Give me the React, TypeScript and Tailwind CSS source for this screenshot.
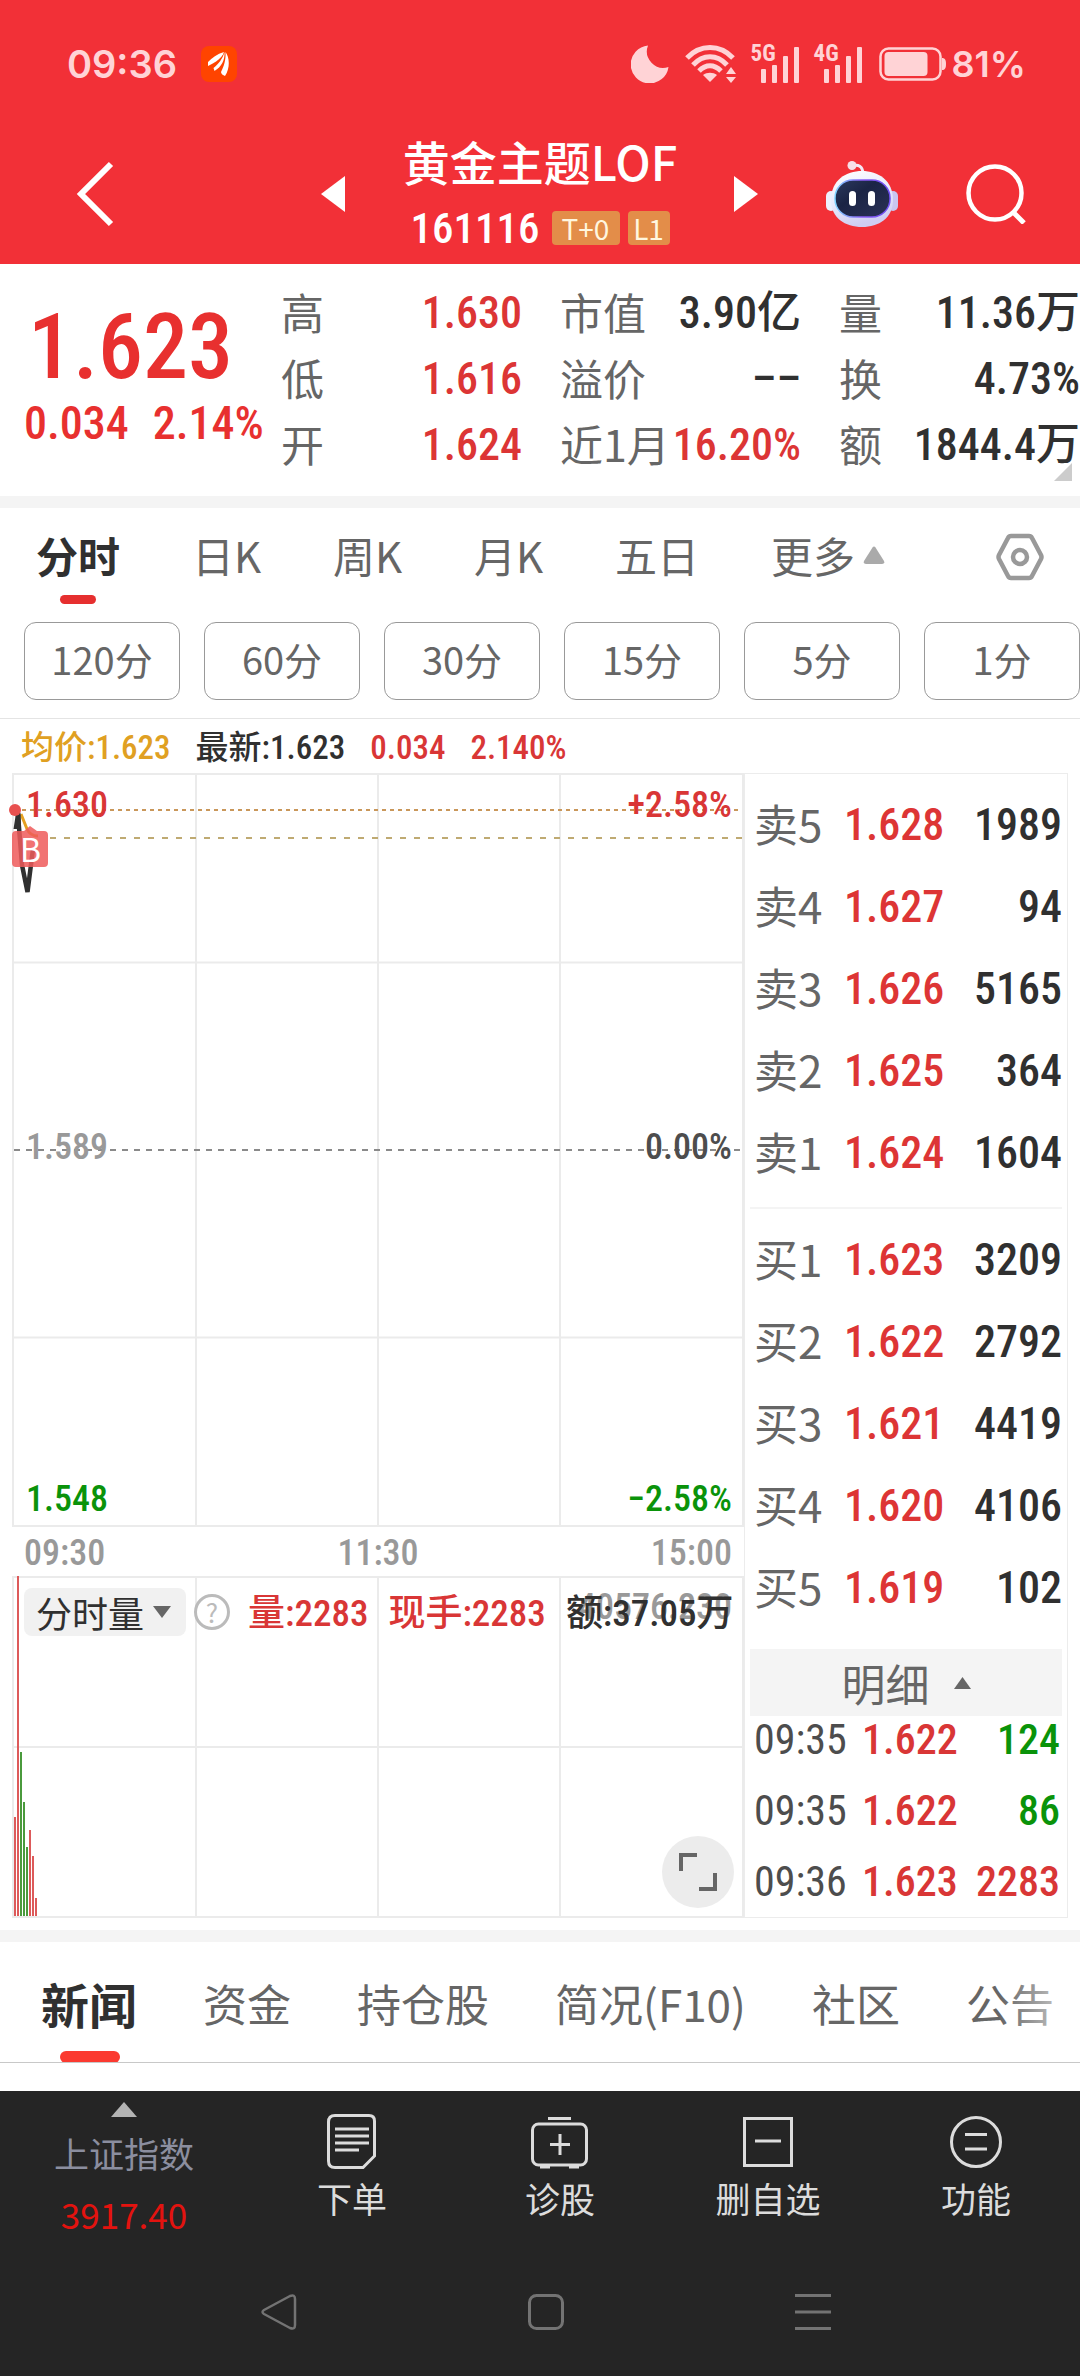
import type { ReactNode } from "react";

type Stat = { label: string; value: string; tone: string };

const stats: Stat[] = [
  { label: "高", value: "1.630", tone: "text-[#dc3535]" },
  { label: "市值", value: "3.90亿", tone: "text-[#303030]" },
  { label: "量", value: "11.36万", tone: "text-[#303030]" },
  { label: "低", value: "1.616", tone: "text-[#dc3535]" },
  { label: "溢价", value: "––", tone: "text-[#303030]" },
  { label: "换", value: "4.73%", tone: "text-[#303030]" },
  { label: "开", value: "1.624", tone: "text-[#dc3535]" },
  { label: "近1月", value: "16.20%", tone: "text-[#dc3535]" },
  { label: "额", value: "1844.4万", tone: "text-[#303030]" },
];

const asks = [
  ["卖5", "1.628", "1989"],
  ["卖4", "1.627", "94"],
  ["卖3", "1.626", "5165"],
  ["卖2", "1.625", "364"],
  ["卖1", "1.624", "1604"],
];

const bids = [
  ["买1", "1.623", "3209"],
  ["买2", "1.622", "2792"],
  ["买3", "1.621", "4419"],
  ["买4", "1.620", "4106"],
  ["买5", "1.619", "102"],
];

const trades = [
  ["09:35", "1.622", "124", "text-[#0a930a]"],
  ["09:35", "1.622", "86", "text-[#0a930a]"],
  ["09:36", "1.623", "2283", "text-[#d93636]"],
];

const volumes = [
  { height: 99, up: true },
  { height: 340, up: true },
  { height: 164, up: false },
  { height: 114, up: false },
  { height: 69, up: false },
  { height: 86, up: true },
  { height: 60, up: true },
  { height: 18, up: true },
];

const narrow = "font-['Roboto_Condensed','Noto_Sans_CJK_SC',sans-serif]";
const num = `${narrow} font-medium`;

function Signal({ label }: { label: string }) {
  return (
    <div className="relative h-[37px] w-12">
      <span className="absolute -top-[3px] left-0 font-['Roboto_Condensed',sans-serif] text-[23px] leading-[22px] font-bold">
        {label}
      </span>
      <svg className="h-full w-full" viewBox="0 0 48 37" fill="currentColor" aria-hidden="true">
        <rect x="10" y="23" width="5" height="14" rx="1" />
        <rect x="21" y="19" width="5" height="18" rx="1" />
        <rect x="32" y="10" width="5" height="27" rx="1" />
        <rect x="43" y="1" width="5" height="36" rx="1" />
      </svg>
    </div>
  );
}

function StatusBar() {
  return (
    <div className="flex h-32 items-center justify-between pr-[54px] pl-[67px] font-['Inter',sans-serif] font-semibold text-[#ffd3d6]">
      <div className="flex items-center gap-6">
        <span className="text-[38px] leading-10">09:36</span>
        <svg className="size-9" viewBox="0 0 36 36" aria-hidden="true">
          <rect width="36" height="36" rx="8" fill="#ff4400" />
          <path d="M7 16c4-4 9-8 16-10-2 6-8 10-16 14z" fill="#fff" />
          <path d="M12.500 22c5-4 9-9 11-16 .5 8-3 15-10 19z" fill="#fff" />
          <path d="M20 26c3-6 5-12 4.500-20 4 5 5 16-.5 24-2-1-4-2-4-4z" fill="#fff" />
        </svg>
      </div>
      <div className="flex items-center">
        <svg className="mr-4 h-[38px] w-[38px]" viewBox="0 0 38 38" fill="currentColor" aria-hidden="true">
          <path d="M17 0.500A19 19 0 1 0 37.500 22A16.500 16.500 0 0 1 17 0.500z" />
        </svg>
        <svg className="mr-[14px] h-[38px] w-[52px]" viewBox="0 0 52 38" aria-hidden="true">
          <g fill="none" stroke="currentColor" strokeWidth="5">
            <path d="M2 13C15 -1 35 -1 48 13" />
            <path d="M8 20C18 9 32 9 42 20" />
            <path d="M14 26C21 19 29 19 36 26" />
          </g>
          <path d="M25 37l-7-7c4-3 10-3 14 0z" fill="currentColor" />
          <path d="M46 22l5 7h-10zM46 38l5-6h-10z" fill="currentColor" />
        </svg>
        <div className="mr-[15px]">
          <Signal label="5G" />
        </div>
        <div className="mr-[17px]">
          <Signal label="4G" />
        </div>
        <svg className="mr-[5px] h-[34px] w-[68px]" viewBox="0 0 68 34" aria-hidden="true">
          <rect x="1.500" y="1.500" width="60" height="31" rx="8" fill="none" stroke="currentColor" strokeWidth="2.500" />
          <rect x="5.500" y="5" width="43" height="24" rx="4" fill="currentColor" />
          <path d="M63 11c3 0 4 2 4 6s-1 6-4 6z" fill="currentColor" />
        </svg>
        <span className="text-[36px] leading-10">81%</span>
      </div>
    </div>
  );
}

function Robot() {
  return (
    <svg className="h-[68px] w-[72px]" viewBox="0 0 72 68" aria-hidden="true">
      <defs>
        <linearGradient id="shell" x1="0" y1="0" x2="0.300" y2="1">
          <stop offset="0" stopColor="#fff" />
          <stop offset="0.600" stopColor="#e6e8fb" />
          <stop offset="1" stopColor="#cfcdf2" />
        </linearGradient>
        <linearGradient id="visor" x1="0" y1="0" x2="1" y2="1">
          <stop offset="0" stopColor="#2c3a5e" />
          <stop offset="0.400" stopColor="#1b2445" />
          <stop offset="1" stopColor="#2b3157" />
        </linearGradient>
        <linearGradient id="rim" x1="0" y1="0" x2="1" y2="0">
          <stop offset="0" stopColor="#7fd3ff" />
          <stop offset="0.500" stopColor="#8b5cf6" />
          <stop offset="1" stopColor="#6d4df0" />
        </linearGradient>
      </defs>
      <path d="M26 6c6-2 11 0 11 8" fill="none" stroke="#f4e9f6" strokeWidth="3" />
      <circle cx="26" cy="5.500" r="4.500" fill="#f7dfe8" />
      <rect x="0" y="31" width="10" height="20" rx="5" fill="#edf0fd" />
      <rect x="62" y="31" width="10" height="20" rx="5" fill="#c9c6f0" />
      <path d="M36 11C52 11 67 20 67 40C67 58 53 67 36 67S5 58 5 40C5 20 20 11 36 11z" fill="url(#shell)" />
      <rect x="9" y="20" width="55" height="37" rx="18" fill="url(#visor)" stroke="url(#rim)" strokeWidth="1.500" />
      <rect x="23" y="31" width="7" height="15" rx="3.500" fill="#fff" />
      <rect x="42" y="31" width="7" height="15" rx="3.500" fill="#fff" />
    </svg>
  );
}

function TitleBar() {
  return (
    <div className="grid h-[136px] grid-cols-[1fr_auto_1fr] items-center pb-1 text-white">
      <div className="flex items-center justify-between pr-[58px] pl-[76px]">
        <button aria-label="返回">
          <svg className="h-[66px] w-[38px]" viewBox="0 0 38 66" fill="none" stroke="currentColor" strokeWidth="6" aria-hidden="true">
            <path d="M35 3L5 33L35 63" />
          </svg>
        </button>
        <button aria-label="上一个">
          <svg className="h-9 w-6" viewBox="0 0 24 36" fill="currentColor" aria-hidden="true">
            <path d="M24 0v36L0 18z" />
          </svg>
        </button>
      </div>
      <div className="flex flex-col items-center">
        <h1 className="text-[47px] leading-[52px] font-medium">黄金主题LOF</h1>
        <div className="mt-4 flex h-[50px] items-center">
          <span className={`mr-3 text-[43px] leading-[50px] ${num}`}>161116</span>
          <span className="mr-2 flex h-[34px] w-[68px] items-center justify-center rounded bg-[#e38d49] text-[28px] leading-8 text-[#fff6df]">
            T+0
          </span>
          <span className="flex h-[34px] w-[42px] items-center justify-center rounded bg-[#e38d49] text-[28px] leading-8 text-[#fff6df]">
            L1
          </span>
        </div>
      </div>
      <div className="flex items-center justify-between pr-[54px] pl-[57px]">
        <button aria-label="下一个">
          <svg className="h-9 w-6" viewBox="0 0 24 36" fill="currentColor" aria-hidden="true">
            <path d="M0 0v36L24 18z" />
          </svg>
        </button>
        <button aria-label="智能助手">
          <Robot />
        </button>
        <button aria-label="搜索">
          <svg className="size-[60px]" viewBox="0 0 60 60" fill="none" stroke="currentColor" strokeWidth="4.500" aria-hidden="true">
            <circle cx="29" cy="29" r="26.500" />
            <path d="M47 48L58 59" strokeWidth="5" />
          </svg>
        </button>
      </div>
    </div>
  );
}

function Quote() {
  return (
    <section className="relative flex h-[232px] pt-4">
      <div className="w-[281px] shrink-0 pl-6 text-[#e8302f]">
        <div className={`mt-5 pl-1 text-[90px] leading-[96px] ${num}`}>1.623</div>
        <div className={`flex gap-6 text-[46px] leading-[54px] ${num}`}>
          <span>0.034</span>
          <span>2.14%</span>
        </div>
      </div>
      <dl className="grid flex-1 auto-rows-[66px] grid-cols-3 gap-x-[38px]">
        {stats.map((s) => (
          <div key={s.label} className="flex items-center justify-between whitespace-nowrap">
            <dt className="pb-1 text-[43px] leading-[62px] text-[#666]">{s.label}</dt>
            <dd className={`text-[44px] leading-[66px] ${num} ${s.tone}`}>{s.value}</dd>
          </div>
        ))}
      </dl>
      <svg className="absolute right-2 bottom-[15px] size-[18px]" viewBox="0 0 18 18" aria-hidden="true">
        <path d="M18 0v18H0z" fill="#ccc" />
      </svg>
    </section>
  );
}

function PeriodTabs() {
  return (
    <nav className="flex h-[98px] items-center pr-9 pl-9 text-[42px] leading-[60px] text-[#666]">
      <div className="flex w-[849px] items-center justify-between pb-1">
        <button className="relative font-bold text-[#303030]">
          分时
          <span className="absolute -bottom-[19px] left-6 h-[9px] w-9 rounded-full bg-[#e62f2f]" />
        </button>
        <button>日K</button>
        <button>周K</button>
        <button>月K</button>
        <button>五日</button>
        <button className="flex items-center gap-2">
          更多
          <svg className="h-[18px] w-[22px]" viewBox="0 0 22 18" fill="#aaa" aria-hidden="true">
            <path d="M9.500 1.500q1.500-2 3 0l8.500 13.500q1 3-2 3h-16q-3 0-2-3z" />
          </svg>
        </button>
      </div>
      <button className="ml-auto" aria-label="设置">
        <svg className="size-12" viewBox="0 0 48 48" fill="none" stroke="#999" strokeWidth="4.500" aria-hidden="true">
          <path d="M15 3h18q2 0 3 2l9 17q1 2 0 4l-9 17q-1 2-3 2h-18q-2 0-3-2l-9-17q-1-2 0-4l9-17q1-2 3-2z" />
          <circle cx="24" cy="24" r="7" />
        </svg>
      </button>
    </nav>
  );
}

function MinuteChips() {
  return (
    <div className="flex gap-6 border-b border-[#e4e4e4] pt-4 pb-[18px] pl-6">
      {["120分", "60分", "30分", "15分", "5分", "1分"].map((t) => (
        <button key={t} className="h-[78px] flex-1 rounded-xl border border-[#999] pb-1 text-[38px] leading-[60px] text-[#666]">
          {t}
        </button>
      ))}
    </div>
  );
}

function GridLines({ rows }: { rows: string[] }) {
  return (
    <g stroke="#ebebeb" strokeWidth="2">
      {["25%", "50%", "75%"].map((x) => (
        <line key={x} x1={x} x2={x} y1="0" y2="100%" />
      ))}
      {rows.map((y) => (
        <line key={y} x1="0" x2="100%" y1={y} y2={y} />
      ))}
    </g>
  );
}

function PriceChart() {
  const label = `absolute text-[36px] leading-[42px] ${num}`;
  return (
    <div className="relative h-[754px] border-2 border-[#ebebeb]">
      <svg className="absolute inset-0 h-full w-full overflow-visible" aria-hidden="true">
        <GridLines rows={["25%", "75%"]} />
        <line x1="0" x2="100%" y1="50%" y2="50%" stroke="#8a8a8a" strokeWidth="2" strokeDasharray="6 6" />
        <line x1="8" x2="100%" y1="35" y2="35" stroke="#c9975a" strokeWidth="2" strokeDasharray="4 4" />
        <line x1="36" x2="100%" y1="63" y2="63" stroke="#bfaa72" strokeWidth="2" strokeDasharray="6 8" />
      </svg>
      <span className={`${label} top-[9px] left-3 text-[#d93636]`}>1.630</span>
      <span className={`${label} top-[9px] right-[10px] text-[#d93636]`}>+2.58%</span>
      <span className={`${label} top-[351px] left-3 text-[#999]`}>1.589</span>
      <span className={`${label} top-[351px] right-[10px] text-[#4d4d4d]`}>0.00%</span>
      <span className={`${label} bottom-[5px] left-3 text-[#0a930a]`}>1.548</span>
      <span className={`${label} right-[10px] bottom-[5px] text-[#0a930a]`}>−2.58%</span>
      <svg className="absolute top-0 -left-0.5 h-[130px] w-12 overflow-visible" viewBox="0 0 48 130" fill="none" aria-hidden="true">
        <path d="M9 39L15 54Q18 61 26 61" stroke="#e5a020" strokeWidth="3" />
        <path d="M6 40L10 90L15.500 117L21 74" stroke="#303030" strokeWidth="4.500" strokeLinejoin="bevel" />
        <path d="M1.500 54L4 38Q6 33 8.500 38L9 54z" fill="#303030" />
        <circle cx="3" cy="35" r="6" fill="#e8504f" />
        <path d="M0 60q0-4 4-4h8l6-5l7 5h7q4 0 4 4v28q0 4-4 4h-28q-4 0-4-4z" fill="#ef5a5a" fillOpacity="0.850" />
      </svg>
      <span className="absolute top-[57px] left-[6px] text-[32px] leading-8 text-white">B</span>
    </div>
  );
}

function VolumeChart() {
  return (
    <div className="relative h-[342px] border-2 border-[#ebebeb]">
      <svg className="absolute inset-0 h-full w-full overflow-visible" aria-hidden="true">
        <GridLines rows={["50%"]} />
      </svg>
      <div className="absolute bottom-0 left-0 flex items-end gap-px">
        {volumes.map((v, i) => (
          <span
            key={i}
            className={v.up ? "w-0.5 bg-[#dd5a5a]" : "w-0.5 bg-[#4a9a3c]"}
            style={{ height: v.height }}
          />
        ))}
      </div>
      <span className={`absolute top-2 right-[10px] text-[36px] leading-[42px] text-[#999] ${num}`}>40576.230</span>
      <div className="absolute top-[10px] left-[10px] flex h-12 items-center whitespace-nowrap">
        <div className="relative mr-2">
          <select
            aria-label="指标"
            className="h-12 w-[162px] appearance-none rounded-lg bg-[#f1f1f1] pl-3 text-[36px] leading-[48px] text-[#303030]"
          >
            <option>分时量</option>
          </select>
          <svg className="pointer-events-none absolute top-[18px] right-[15px] h-3 w-[18px]" viewBox="0 0 18 12" fill="#666" aria-hidden="true">
            <path d="M0 0h18L9 12z" />
          </svg>
        </div>
        <button
          aria-label="说明"
          className="flex size-9 items-center justify-center rounded-full border-[3px] border-[#bbb] text-[26px] leading-[30px] text-[#bbb]"
        >
          ?
        </button>
        <div className={`ml-[18px] flex gap-5 pt-1 text-[37px] leading-[48px] ${num}`}>
          <span className="text-[#d93636]">量:2283</span>
          <span className="text-[#d93636]">现手:2283</span>
          <span className="text-[#303030]">额:37.05万</span>
        </div>
      </div>
      <button
        aria-label="全屏"
        className="absolute right-2 bottom-2 flex size-[72px] items-center justify-center rounded-full bg-[#ececec]"
      >
        <svg className="size-[38px]" viewBox="0 0 38 38" fill="none" stroke="#666" strokeWidth="4" aria-hidden="true">
          <path d="M2 18V2H18M36 20V36H20" />
        </svg>
      </button>
    </div>
  );
}

function BookRows({ rows }: { rows: string[][] }) {
  return (
    <table className="w-full">
      <tbody>
        {rows.map(([name, price, qty]) => (
          <tr key={name} className="h-[82px]">
            <th scope="row" className="w-[90px] pb-1 text-left text-[44px] leading-[60px] font-normal text-[#666]">
              {name}
            </th>
            <td className={`text-[44px] leading-[60px] text-[#dd3535] ${num}`}>{price}</td>
            <td className={`text-right text-[44px] leading-[60px] text-[#303030] ${num}`}>{qty}</td>
          </tr>
        ))}
      </tbody>
    </table>
  );
}

function OrderBook() {
  return (
    <aside className="w-[324px] shrink-0 border border-[#ececec] px-[5px]">
      <div className="pt-[10px] pl-1">
        <BookRows rows={asks} />
      </div>
      <hr className="mt-[13px] border-t-2 border-[#f4f4f4]" />
      <div className="pt-[10px] pl-1">
        <BookRows rows={bids} />
      </div>
      <button className="mt-5 flex h-[67px] w-full items-center justify-center gap-6 bg-[#f4f4f4] text-[44px] leading-[60px] text-[#666]">
        明细
        <svg className="h-3 w-[17px]" viewBox="0 0 17 12" fill="#666" aria-hidden="true">
          <path d="M8.500 0L17 12H0z" />
        </svg>
      </button>
      <div className="-mt-3 pr-0.5 pl-1">
        <table className="w-full">
          <tbody>
            {trades.map(([time, price, qty, tone], i) => (
              <tr key={i} className={`h-[71px] text-[42px] leading-[56px] ${narrow}`}>
                <td className="w-[108px] text-[#4d4d4d]">{time}</td>
                <td className="font-medium text-[#d93636]">{price}</td>
                <td className={`text-right font-medium ${tone}`}>{qty}</td>
              </tr>
            ))}
          </tbody>
        </table>
      </div>
    </aside>
  );
}

function InfoTabs() {
  return (
    <nav className="relative h-[121px] overflow-hidden border-b border-[#c8c8c8]">
      <div className="flex h-[121px] items-center gap-[66px] pl-[41px] text-[44px] leading-[64px] whitespace-nowrap text-[#666]">
        <button className="relative text-[48px] font-bold text-[#303030]">
          新闻
          <span className="absolute -bottom-7 left-[19px] h-3 w-[60px] rounded-full bg-[#fb3a30]" />
        </button>
        <button>资金</button>
        <button>持仓股</button>
        <button>简况(F10)</button>
        <button>社区</button>
        <button>公告</button>
      </div>
      <div className="pointer-events-none absolute top-0 right-0 h-[100px] w-20 bg-linear-to-r from-white/0 to-white/80" />
    </nav>
  );
}

function Tool({ label, children }: { label: string; children: ReactNode }) {
  return (
    <button className="flex flex-1 flex-col items-center pt-[21px] text-[35px] leading-[56px] text-[#dcdcdc]">
      <svg className="h-[58px] w-[58px]" viewBox="0 0 58 58" fill="none" stroke="currentColor" strokeWidth="3" aria-hidden="true">
        {children}
      </svg>
      {label}
    </button>
  );
}

function BottomBar() {
  return (
    <footer className="flex-1 bg-[#252525]">
      <div className="flex h-[164px]">
        <button className="flex w-[248px] flex-col items-center pt-[11px]">
          <svg className="h-[15px] w-[26px]" viewBox="0 0 26 15" fill="#b3b3b3" aria-hidden="true">
            <path d="M13 0L26 15H0z" />
          </svg>
          <span className="mt-2 text-[35px] leading-[56px] text-[#8b8e9f]">上证指数</span>
          <span className="mt-1 text-[35px] leading-[58px] text-[#e3130f]">3917.40</span>
        </button>
        <Tool label="下单">
          <path d="M12 3.500H46Q51.500 3.500 51.500 9V44L40 55.500H12Q5.500 55.500 5.500 49V10Q5.500 3.500 12 3.500z" />
          <path d="M12 17H46M12 24H46M12 31H46M12 38H36" />
        </Tool>
        <Tool label="诊股">
          <rect x="1.500" y="12" width="54" height="41" rx="6" />
          <path d="M17 6.500H40M29 22V43M19 32.500H39" />
          <path d="M9 55H19M38 55H48" strokeWidth="3" />
        </Tool>
        <Tool label="删自选">
          <rect x="5.500" y="6.500" width="47" height="47" />
          <path d="M16 29H42" />
        </Tool>
        <Tool label="功能">
          <circle cx="29" cy="30" r="24.500" />
          <path d="M18 22.500H40M18 37H40" />
        </Tool>
      </div>
      <div className="grid h-[121px] grid-cols-3 place-items-center pr-[134px] pb-2 pl-[145px] text-[#737373]">
        <button aria-label="后退">
          <svg className="size-9" viewBox="0 0 36 36" fill="none" stroke="currentColor" strokeWidth="2.500" strokeLinejoin="round" aria-hidden="true">
            <path d="M3 16L29 2Q34 0 34 5V31Q34 36 29 34L3 20Q0 18 3 16z" />
          </svg>
        </button>
        <button aria-label="主页">
          <svg className="size-9" viewBox="0 0 36 36" fill="none" stroke="currentColor" strokeWidth="3" aria-hidden="true">
            <rect x="1.500" y="1.500" width="33" height="33" rx="7" />
          </svg>
        </button>
        <button aria-label="最近任务">
          <svg className="size-9" viewBox="0 0 36 36" fill="none" stroke="currentColor" strokeWidth="3" aria-hidden="true">
            <path d="M0 1.500H36M0 18H36M0 34.500H36" />
          </svg>
        </button>
      </div>
    </footer>
  );
}

export default function App() {
  return (
    <div className="flex min-h-screen w-full flex-col overflow-x-hidden bg-white font-['Noto_Sans_CJK_SC',sans-serif]">
      <header className="bg-[#f23037]">
        <StatusBar />
        <TitleBar />
      </header>
      <Quote />
      <div className="h-3 bg-[#f4f4f4]" />
      <PeriodTabs />
      <MinuteChips />
      <main>
        <div className={`flex h-[54px] items-center gap-[25px] pt-1 pl-[21px] text-[33px] leading-[50px] ${num}`}>
          <span className="text-[#e0a022]">均价:1.623</span>
          <span className="text-[#303030]">最新:1.623</span>
          <span className="text-[#d93636]">0.034</span>
          <span className="text-[#d93636]">2.140%</span>
        </div>
        <div className="flex pr-3 pb-3 pl-3">
          <div className="min-w-0 flex-1">
            <PriceChart />
            <div className={`flex h-[49px] items-center justify-between px-3 pt-1 text-[36px] leading-[45px] text-[#999] ${num}`}>
              <span>09:30</span>
              <span>11:30</span>
              <span>15:00</span>
            </div>
            <VolumeChart />
          </div>
          <OrderBook />
        </div>
      </main>
      <div className="h-3 bg-[#f4f4f4]" />
      <InfoTabs />
      <div className="h-7" />
      <BottomBar />
    </div>
  );
}
